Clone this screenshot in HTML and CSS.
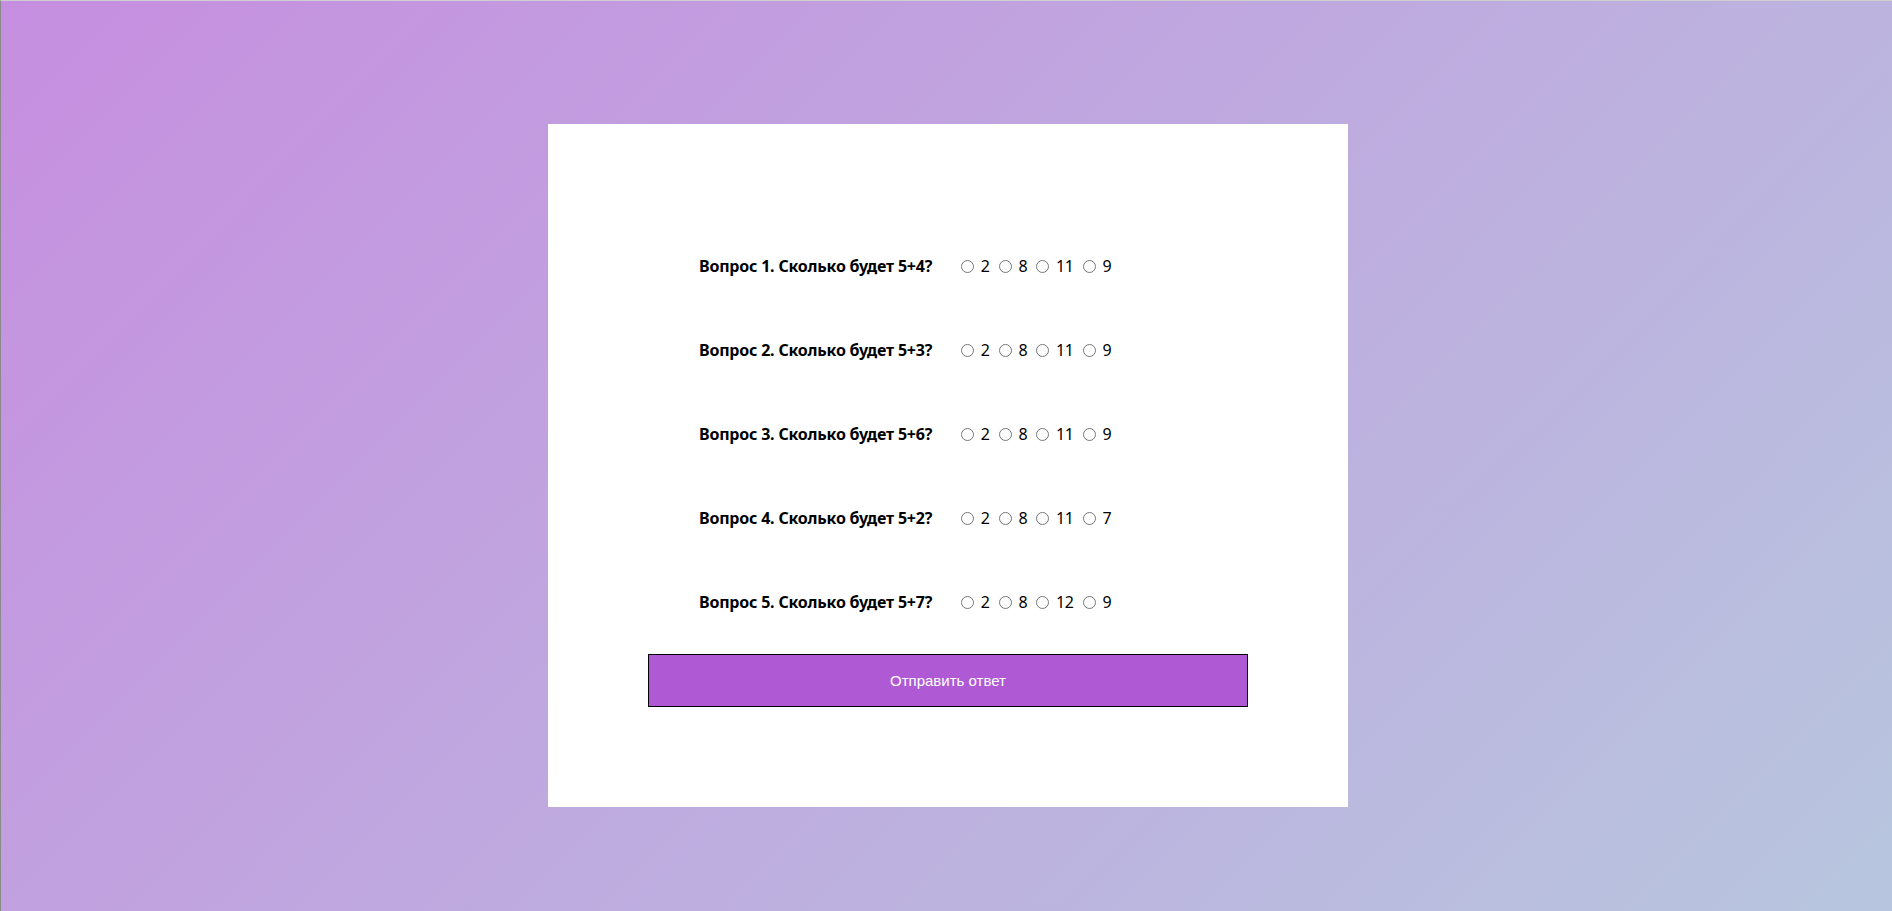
FILE: index.html
```html
<!DOCTYPE html>
<html lang="ru">
<head>
<meta charset="utf-8">
<title>Тест</title>
<link rel="stylesheet" href="styles.css">
</head>
<body>
<div class="page">
  <form class="card">
    <div class="row">
      <span class="question">Вопрос 1. Сколько будет 5+4?</span>
      <span class="options"><input type="radio" name="q1"> 2 <input type="radio" name="q1"> 8 <input type="radio" name="q1"> 11 <input type="radio" name="q1"> 9</span>
    </div>
    <div class="row">
      <span class="question">Вопрос 2. Сколько будет 5+3?</span>
      <span class="options"><input type="radio" name="q2"> 2 <input type="radio" name="q2"> 8 <input type="radio" name="q2"> 11 <input type="radio" name="q2"> 9</span>
    </div>
    <div class="row">
      <span class="question">Вопрос 3. Сколько будет 5+6?</span>
      <span class="options"><input type="radio" name="q3"> 2 <input type="radio" name="q3"> 8 <input type="radio" name="q3"> 11 <input type="radio" name="q3"> 9</span>
    </div>
    <div class="row">
      <span class="question">Вопрос 4. Сколько будет 5+2?</span>
      <span class="options"><input type="radio" name="q4"> 2 <input type="radio" name="q4"> 8 <input type="radio" name="q4"> 11 <input type="radio" name="q4"> 7</span>
    </div>
    <div class="row">
      <span class="question">Вопрос 5. Сколько будет 5+7?</span>
      <span class="options"><input type="radio" name="q5"> 2 <input type="radio" name="q5"> 8 <input type="radio" name="q5"> 12 <input type="radio" name="q5"> 9</span>
    </div>
    <button type="button" class="submit">Отправить ответ</button>
  </form>
</div>
</body>
</html>
```
FILE: styles.css
```css
html, body {
  margin: 0;
  padding: 0;
}
body {
  min-height: 911px;
  background: linear-gradient(135deg, #c68ee0 0%, #b7c6de 100%);
  font-family: "Noto Sans", "Open Sans", sans-serif;
  color: #000;
  border-top: 1px solid #cfcfcf;
  border-left: 1px solid #8a8a8a;
  box-sizing: border-box;
}
.page {
  display: flex;
  justify-content: center;
  padding-top: 123px;
  padding-left: 3px;
}
.card {
  width: 800px;
  height: 683px;
  background: #fff;
  box-sizing: border-box;
  padding-top: 100px;
  display: flex;
  flex-direction: column;
}
.row {
  height: 84px;
  display: flex;
  align-items: center;
  padding-left: 151px;
  font-size: 16px;
}
.question {
  font-weight: 700;
  width: 257px;
  white-space: nowrap;
  letter-spacing: -0.2px;
}
.options {
  white-space: nowrap;
  letter-spacing: -0.3px;
}
.options input {
  margin: 0 3px 0 5px;
  vertical-align: -1px;
}
.submit {
  align-self: flex-start;
  margin: 10px 0 0 100px;
  width: 600px;
  height: 53px;
  background: #af59d4;
  border: 1px solid #000;
  color: #fff;
  font-family: "Liberation Sans", Arial, sans-serif;
  font-size: 15px;
  padding: 0;
}
```
